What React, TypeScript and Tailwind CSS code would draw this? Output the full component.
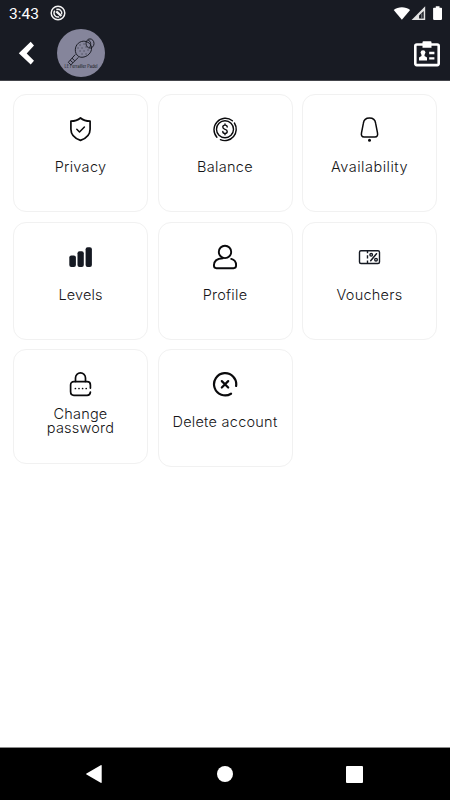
import React from 'react'

type CardItem = {
  label: string
  icon: React.ReactNode
  labelClass: string
  tight?: boolean
}

const stroke = {
  fill: 'none',
  stroke: '#0a0a0c',
  strokeLinecap: 'round' as const,
  strokeLinejoin: 'round' as const,
}

function ShieldIcon() {
  return (
    <svg width="26" height="26" viewBox="0.5 -0.3 26 26" {...stroke} strokeWidth="1.700">
      <path d="M13 1.700C10.500 3.800 7 4.900 3.400 4.900v8c0 5.200 4 9.200 9.600 11.200 5.600-2 9.600-6 9.600-11.200v-8C19 4.900 15.500 3.800 13 1.700z" />
      <path d="M9.300 13l2.700 2.700 4.900-5" strokeWidth="1.500" />
    </svg>
  )
}

function CoinIcon() {
  return (
    <svg width="26" height="26" viewBox="0 -0.3 26 26" {...stroke} strokeWidth="1.400">
      <circle cx="13" cy="13" r="8.500" />
      <path d="M4.900 21A11.400 11.400 0 0 1 20.400 4.400" />
      <path d="M22.400 6.700A11.400 11.400 0 0 1 8.400 23.400" />
      <path d="M15.200 10.700c0-1.100-.9-1.900-2.200-1.900s-2.200.8-2.200 2 .8 1.800 2.200 2.200 2.200 1 2.200 2.200-.9 2-2.200 2-2.200-.8-2.200-2M13 7.700v1.100M13 17.200v1.200" />
    </svg>
  )
}

function BellIcon() {
  return (
    <svg width="26" height="26" viewBox="0.500 -0.3 26 26" {...stroke} strokeWidth="1.500">
      <path d="M13 1.600c-3.200 0-5.700 2-6.100 5.300L5 16.500c-.5 2.500.3 4.200 2.600 4.200h10.800c2.300 0 3.100-1.700 2.600-4.200l-1.900-9.600C18.700 3.600 16.200 1.600 13 1.600z" />
      <circle cx="13" cy="24" r="1.500" fill="#0a0a0c" stroke="none" />
    </svg>
  )
}

function LevelsIcon() {
  return (
    <svg width="26" height="26" viewBox="0.700 0 26 26" fill="#151922">
      <rect x="2" y="11.500" width="6.600" height="11.600" rx="2" />
      <rect x="10.200" y="7.300" width="6.300" height="15.800" rx="2" />
      <rect x="18.300" y="3.200" width="6.300" height="19.900" rx="2" />
    </svg>
  )
}

function PersonIcon() {
  return (
    <svg width="26" height="26" viewBox="0 0 26 26" {...stroke} strokeWidth="1.900">
      <circle cx="13" cy="7.900" r="6.200" />
      <path d="M10.800 14.200C5.500 14.500 1.900 17.100 1.900 21.300c0 2 .6 2.900 2.500 2.900h17.200c1.900 0 2.500-.9 2.500-2.900 0-3.400-2-5.800-4.900-6.400" />
    </svg>
  )
}

function VoucherIcon() {
  return (
    <svg width="26" height="26" viewBox="0.500 0 26 26" {...stroke} stroke="#151922" strokeWidth="1.400">
      <rect x="3" y="6.700" width="20" height="12.800" rx="1.500" />
      <path d="M11 7v2.300M11 11.300v3.200M11 16.500v2.600" strokeLinecap="butt" />
      <path d="M14.200 16.700l5.800-7" strokeWidth="1.500" />
      <circle cx="14.700" cy="10.800" r="1.300" />
      <circle cx="19.500" cy="15.700" r="1.300" />
    </svg>
  )
}

function LockIcon() {
  return (
    <svg width="26" height="26" viewBox="0.500 -0.3 26 26" {...stroke} strokeWidth="1.700">
      <path d="M8 10.200V6.600a5 5 0 0 1 10 0v3.600" />
      <path d="M22.900 16.800v-3.200c0-2-1.300-3.300-3.300-3.300H6.400c-2 0-3.300 1.300-3.300 3.300v6.700c0 2.200 1.300 3.800 3.300 3.800h13.200c1.900 0 3.100-1.100 3.300-3.200" />
      <path d="M7.900 17.200h.01M11.500 17.200h.01M15.100 17.200h.01M18.700 17.200h.01" />
    </svg>
  )
}

function DeleteIcon() {
  return (
    <svg width="26" height="26" viewBox="0 -0.300 26 26" {...stroke} strokeWidth="2.200">
      <path d="M24.100 14.700A11.100 11.100 0 1 0 19 22.400" />
      <path d="M9.800 9.800l6.400 6.400M16.200 9.800l-6.400 6.400" />
    </svg>
  )
}

const items: CardItem[] = [
  { label: 'Privacy', icon: <ShieldIcon />, labelClass: 'tracking-[0.3px]' },
  { label: 'Balance', icon: <CoinIcon />, labelClass: 'tracking-[0.3px]' },
  { label: 'Availability', icon: <BellIcon />, labelClass: 'tracking-[0.5px]' },
  { label: 'Levels', icon: <LevelsIcon />, labelClass: 'tracking-[0.1px]' },
  { label: 'Profile', icon: <PersonIcon />, labelClass: 'tracking-[0.25px]' },
  { label: 'Vouchers', icon: <VoucherIcon />, labelClass: 'tracking-[0.25px]' },
  { label: 'Change password', icon: <LockIcon />, labelClass: 'tracking-[0.2px]', tight: true },
  { label: 'Delete account', icon: <DeleteIcon />, labelClass: 'tracking-[0.25px]' },
]

function Card({ label, icon, labelClass, tight }: CardItem) {
  return (
    <button
      className={`flex flex-col items-center rounded-[13px] border-[1.5px] border-[#f1f1f1] bg-white pt-[21px] ${
        tight ? 'h-[115px]' : 'h-[118px]'
      }`}
    >
      {icon}
      <span
        className={`text-[14.500px] font-light text-[#151517] ${labelClass} ${
          tight ? 'mt-[10px] w-20 leading-[14px]' : 'mt-[15px] leading-[20px] whitespace-nowrap'
        }`}
      >
        {label}
      </span>
    </button>
  )
}

function StatusBar() {
  return (
    <div className="flex h-[26px] items-center pr-[8px] pl-[9px]">
      <span className="w-[41px] pt-0.5 font-['Roboto'] text-[15.500px] leading-[24px] text-white">3:43</span>
      <svg width="16" height="16" viewBox="0 0 16 16" fill="none" stroke="#f4f4f4">
        <circle cx="8" cy="8" r="6.800" strokeWidth="1.500" />
        <path d="M9.200 11.800A4 4 0 0 1 4.800 5.600M6.300 4.500A4 4 0 0 1 11.600 9.400" strokeWidth="1.400" />
        <path d="M6.300 6.300l5 4.700" strokeWidth="2.400" />
      </svg>
      <svg className="mt-px ml-auto" width="50" height="16" viewBox="0 0 50 16">
        <path d="M1.700 3.900C6.100.3 13.700.3 18.100 3.900L9.900 13.700z" fill="#fff" />
        <path d="M33.200.3v13.600H19.600z" fill="#e4e4e4" />
        <path d="M31.700 5v7.400h-4.600V9.600z" fill="#181b23" />
        <path d="M29.300 7.500h1v5h-1z" fill="#8b8d92" />
        <path d="M41.900 1.800h1.900V.3h3.700v1.500h1.700q.8 0 .8.800v10.500q0 .8-.8.800h-7.300q-.8 0-.8-.8V2.600q0-.8.8-.8z" fill="#fff" />
      </svg>
    </div>
  )
}

function Logo() {
  return (
    <svg className="ml-[23px]" width="48" height="48" viewBox="0 0 48 48">
      <circle cx="24" cy="24" r="24" fill="#85859b" />
      <g fill="none" stroke="#11131a" strokeWidth=".9">
        <path d="M19 24.500c-2-5 .5-10.500 5.500-12 4.500-1.300 9.500 1.500 10 6 .6 5-4 9.500-9.500 9.800-2.500 0-4.500-1-6-3.800z" />
        <path d="M18.300 25.500l-7 7.800 2.600 2.500 7.700-7.600M13.200 31.200l2.700 2.500M15 29.200l2.700 2.600" />
        <ellipse cx="33" cy="14.500" rx="4" ry="4.600" />
        <path d="M31 11c3 1 3.500 5 1.500 7.500" />
      </g>
      <path
        d="M23 16h.1M27 15h.1M21 19h.1M25 19h.1M29 18h.1M23 22h.1M27 22h.1M31 21h.1M25 25h.1M29 25h.1"
        stroke="#11131a"
        strokeWidth=".8"
        strokeLinecap="round"
      />
      <text
        x="7.500"
        y="39.300"
        fill="#11131a"
        fontFamily="Inter, sans-serif"
        fontSize="4.200"
        textLength="33"
        lengthAdjust="spacingAndGlyphs"
      >
        LE Ferrailler Padel
      </text>
    </svg>
  )
}

function Header() {
  return (
    <header className="h-[81px] border-b border-[#44454b] bg-[#181b23]">
      <StatusBar />
      <div className="flex h-[54px] items-center pr-[10px] pl-[13px]">
        <svg className="ml-[5px]" width="16" height="24" viewBox="0 0 16 24">
          <path d="M12.700.7l3.300 3.700-7.300 8 7.300 7.400-3.300 3.700L.8 12.300z" fill="#fff" />
        </svg>
        <Logo />
        <svg className="mt-px ml-auto" width="26" height="26" viewBox="0 0 26 26">
          <rect x="1.300" y="3.500" width="23.400" height="20.600" rx="1.500" fill="none" stroke="#fff" strokeWidth="2.600" />
          <path d="M9.500.3h7q1 0 1 1v5.500h-9V1.300q0-1 1-1z" fill="#fff" />
          <circle cx="9" cy="11.600" r="2.400" fill="#fff" />
          <path d="M7.500 13h3v2l2.500 1.500v3H5v-3L7.500 15z" fill="#fff" />
          <path d="M15.200 12h5.200M15.200 17.400h5.200" stroke="#fff" strokeWidth="2.300" />
        </svg>
      </div>
    </header>
  )
}

function NavBar() {
  return (
    <nav className="flex h-[53px] items-center border-t border-[#8b8b8b] bg-black pl-[85px]">
      <svg width="17" height="20" viewBox="0 0 17 20" fill="#fff">
        <path d="M1.500 9.400L15.700 1.200q1-.5 1 .6v16.400q0 1.100-1 .6L1.500 10.600q-1-.6 0-1.200z" />
      </svg>
      <span className="ml-[115px] size-4 rounded-full bg-white" />
      <span className="ml-[113px] size-[17px] rounded-[1px] bg-white" />
    </nav>
  )
}

export default function App() {
  return (
    <div className="flex h-[800px] w-[450px] flex-col bg-white font-['Inter',sans-serif]">
      <Header />
      <main className="grid flex-1 grid-cols-3 content-start items-start gap-x-[9.500px] gap-y-[9.500px] px-[13px] pt-[13px]">
        {items.map((item) => (
          <Card key={item.label} {...item} />
        ))}
      </main>
      <NavBar />
    </div>
  )
}
